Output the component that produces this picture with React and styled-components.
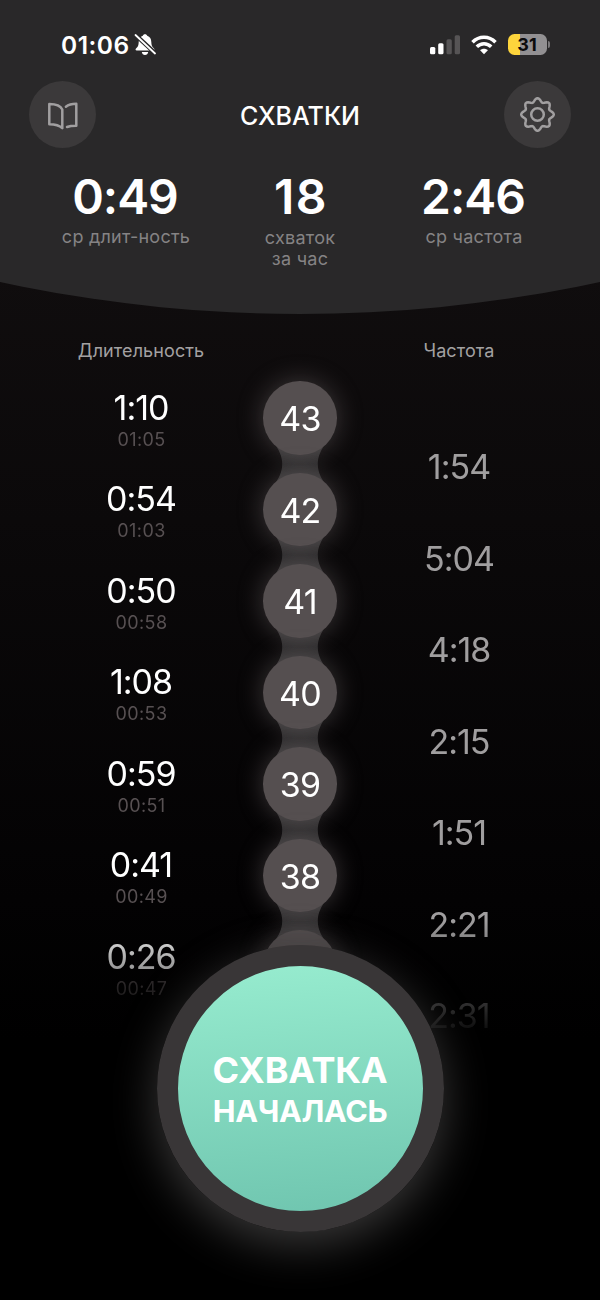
import styled, { createGlobalStyle } from "styled-components";

const contractions = [
  { id: 43, duration: "1:10", startedAt: "01:05", interval: "1:54" },
  { id: 42, duration: "0:54", startedAt: "01:03", interval: "5:04" },
  { id: 41, duration: "0:50", startedAt: "00:58", interval: "4:18" },
  { id: 40, duration: "1:08", startedAt: "00:53", interval: "2:15" },
  { id: 39, duration: "0:59", startedAt: "00:51", interval: "1:51" },
  { id: 38, duration: "0:41", startedAt: "00:49", interval: "2:21" },
  { id: null, duration: "0:26", startedAt: "00:47", interval: "2:31" },
];

const GlobalStyle = createGlobalStyle`
  * {
    box-sizing: border-box;
  }
  body {
    margin: 0;
    background: #000;
    font-family: Inter, "Liberation Sans", sans-serif;
  }
`;

const Screen = styled.div`
  position: relative;
  width: 600px;
  height: 1300px;
  overflow: hidden;
  color: #fff;
  background: linear-gradient(#100d0e 270px, #0b090a 520px, #030203 900px, #000 1040px);
`;

const Header = styled.header`
  height: 314px;
  background: #292829;
  clip-path: circle(1422px at 50% calc(100% - 1422px));
`;

const StatusBar = styled.div`
  height: 81px;
  padding: 30px 50px 0 61px;
  display: flex;
  justify-content: space-between;
`;

const StatusGroup = styled.div`
  height: 29px;
  display: flex;
  align-items: center;
  gap: ${({ $gap }) => $gap}px;
`;

const Clock = styled.span`
  font-size: 24.5px;
  font-weight: 600;
  letter-spacing: 0.5px;
`;

const Battery = styled.div`
  width: 39px;
  height: 21px;
  padding-right: 1px;
  border-radius: 6.5px;
  background: linear-gradient(90deg, #fdd53c 12px, #929092 12px);
  color: #0c0b0c;
  font-size: 18px;
  font-weight: 700;
  line-height: 21px;
  text-align: center;
`;

const BatteryTip = styled.div`
  width: 2px;
  height: 7px;
  border-radius: 0 3px 3px 0;
  background: #7a787a;
`;

const NavBar = styled.nav`
  height: 67px;
  padding: 0 29px;
  display: flex;
  align-items: center;
  justify-content: space-between;
`;

const RoundButton = styled.button`
  width: 67px;
  height: 67px;
  padding: 0;
  border: 0;
  border-radius: 50%;
  background: #3b393a;
  color: #a19fa0;
  display: flex;
  align-items: center;
  justify-content: center;
`;

const Title = styled.h1`
  margin: 0;
  padding-top: 2px;
  font-size: 25px;
  font-weight: 500;
`;

const Stats = styled.div`
  padding: 24px 39px 0;
  display: grid;
  grid-template-columns: repeat(3, 174px);
  text-align: center;
`;

const StatValue = styled.div`
  padding-right: ${({ $spacing }) => ($spacing ? 0 : 2)}px;
  padding-left: ${({ $spacing }) => ($spacing ? 2 : 0)}px;
  font-size: 48px;
  font-weight: 600;
  line-height: 50px;
  letter-spacing: ${({ $spacing }) => $spacing || -1}px;
`;

const StatLabel = styled.div`
  margin-top: ${({ $top }) => $top || 4}px;
  color: #858384;
  font-size: 18px;
  line-height: 21px;
  letter-spacing: 0.25px;
  white-space: pre-line;
`;

const ColumnTitles = styled.div`
  height: 28px;
  padding: 0 62px;
  margin-top: 26px;
  display: grid;
  grid-template-columns: 158px 160px 158px;
  color: #a3a1a2;
  font-size: 18px;
  line-height: 22px;
  letter-spacing: 0.1px;
  text-align: center;

  & > :last-child {
    grid-column: 3;
  }
`;

/* starts under the titles so the first glow is not cut */
const History = styled.div`
  height: 700px;
  margin-top: -28px;
  padding: 32px 62px 0;
  display: grid;
  grid-template-columns: 158px 160px 158px;
  overflow: hidden;
  mask-image: linear-gradient(#000 580px, transparent 700px);
`;

const Durations = styled.div`
  text-align: center;
`;

const DurationItem = styled.div`
  height: 91.5px;
  padding-top: 14.5px;
`;

const Duration = styled.div`
  font-size: 34px;
  line-height: 42px;
  letter-spacing: -1px;
`;

const StartedAt = styled.div`
  padding-left: 1px;
  color: #575052;
  font-size: 18px;
  line-height: 22px;
  letter-spacing: 0.4px;
`;

const Intervals = styled.div`
  padding-top: 49px;
  text-align: center;
`;

const Interval = styled.div`
  height: 91.5px;
  color: #a09e9f;
  font-size: 34px;
  line-height: 91.5px;
  letter-spacing: -1px;
`;

const Chain = styled.div`
  padding-top: 9px;
  display: flex;
  flex-direction: column;
  align-items: center;
`;

const Node = styled.div`
  flex: none;
  width: 73.5px;
  height: 73.5px;
  border-radius: 50%;
  background: #554f50;
  box-shadow: 0 0 26px rgba(125, 115, 117, 0.45);
  font-size: 34px;
  line-height: 75px;
  letter-spacing: -0.8px;
  text-align: center;
  position: relative;
`;

const LinkShape = styled.svg`
  flex: none;
  width: 56px;
  height: 46px;
  margin: -14px 0;
`;

const StartButton = styled.button`
  position: absolute;
  top: 944.5px;
  left: 156.5px;
  width: 287px;
  height: 287px;
  padding: 3px 0 0;
  border: 21.5px solid #393637;
  border-radius: 50%;
  background: linear-gradient(175deg, #97eccf, #6fc5af);
  box-shadow: 0 13px 46px rgba(125, 122, 123, 0.46);
  color: #fff;
  font-family: inherit;
  font-weight: 700;
  text-align: center;
`;

const ActionName = styled.div`
  font-size: 36px;
  line-height: 42px;
  letter-spacing: -0.3px;
`;

const ActionState = styled.div`
  font-size: 30.5px;
  line-height: 40px;
  letter-spacing: -0.3px;
`;

const BellOffIcon = () => (
  <svg width="22" height="23" viewBox="0 0 22 23">
    <g fill="#fff">
      <path d="M11 1.2c-1.2 0-2 .7-2.2 1.6C6 3.7 4.800 6 4.700 9c-.1 3.500-.8 4.700-2.700 6.500-.8.8-.6 2 .7 2h16.600c1.300 0 1.500-1.200.7-2-1.900-1.800-2.600-3-2.700-6.500-.1-3-1.300-5.300-4.100-6.200C13 1.900 12.200 1.200 11 1.200z" />
      <path d="M7.800 19h6.400c-.3 1.900-1.500 3-3.200 3s-2.900-1.100-3.200-3z" />
    </g>
    <path d="M1 1.500L21.500 20.500" stroke="#292829" strokeWidth="4.400" />
    <path d="M1.500 2L21 20.500" stroke="#fff" strokeWidth="1.8" strokeLinecap="round" />
  </svg>
);

const SignalIcon = () => (
  <svg width="30" height="20" viewBox="0.3 0 30 20">
    <rect x="0.3" y="12" width="5.3" height="7.3" rx="1.5" fill="#fff" />
    <rect x="8.5" y="8.2" width="5.3" height="11.1" rx="1.5" fill="#fff" />
    <rect x="16.8" y="4.3" width="5.3" height="15" rx="1.5" fill="#565455" />
    <rect x="25" y="0.3" width="5.3" height="19" rx="1.5" fill="#565455" />
  </svg>
);

const WifiIcon = () => (
  <svg width="26" height="20" viewBox="0 0 26 20" fill="none" stroke="#fff" strokeWidth="3.5">
    <path d="M1.500 7.300C8 .6 18 .6 24.500 7.300" />
    <path d="M5.800 11.800C10 7.700 16 7.700 20.200 11.800" />
    <path d="M13 19.300l-3.900-4.100c2.200-2 5.600-2 7.800 0z" fill="#fff" stroke="none" />
  </svg>
);

const BookIcon = () => (
  <svg
    width="32"
    height="32"
    viewBox="0 0 32 32"
    fill="none"
    stroke="currentColor"
    strokeWidth="2.5"
    strokeLinecap="round"
    strokeLinejoin="round"
  >
    <path d="M2.300 5v20.200c5.500 0 10.300 1.300 13 4V10.500C13.500 6.600 8.700 5 2.300 5z" />
    <path d="M18.900 7.700c2.400-1.900 6-2.900 10.400-2.900v21.900c-3.800 0-6.800.3-9.300 1.300" />
  </svg>
);

// eight soft teeth around the hub
const gearPath =
  Array.from({ length: 96 }, (_, i) => {
    const angle = (i / 96) * Math.PI * 2;
    const radius = 14.5 + 1.8 * Math.cos(angle * 8);
    const x = 17.5 + radius * Math.sin(angle);
    const y = 17.5 - radius * Math.cos(angle);
    return `${i ? "L" : "M"}${x.toFixed(2)} ${y.toFixed(2)}`;
  }).join("") + "Z";

const GearIcon = () => (
  <svg width="35" height="35" viewBox="0 0 35 35" fill="none" stroke="currentColor" strokeWidth="2.5">
    <path d={gearPath} strokeLinejoin="round" />
    <circle cx="17.5" cy="17.5" r="6.3" />
  </svg>
);

const ChainLink = () => (
  <LinkShape viewBox="0 0 56 46">
    <defs>
      <linearGradient id="link" x1="0" y1="0" x2="0" y2="1">
        <stop offset="0.2" stopColor="#383637" />
        <stop offset="0.5" stopColor="#2b2a2b" />
        <stop offset="0.8" stopColor="#383637" />
      </linearGradient>
    </defs>
    <path d="M1 0C7 9 10.200 15 10.200 23S7 37 1 46H55C49 37 45.800 31 45.800 23S49 9 55 0z" fill="url(#link)" />
  </LinkShape>
);

export default function App() {
  return (
    <Screen>
      <GlobalStyle />
      <Header>
        <StatusBar>
          <StatusGroup $gap={4.5}>
            <Clock>01:06</Clock>
            <BellOffIcon />
          </StatusGroup>
          <StatusGroup $gap={11}>
            <SignalIcon />
            <WifiIcon />
            <StatusGroup $gap={1}>
              <Battery>31</Battery>
              <BatteryTip />
            </StatusGroup>
          </StatusGroup>
        </StatusBar>
        <NavBar>
          <RoundButton>
            <BookIcon />
          </RoundButton>
          <Title>СХВАТКИ</Title>
          <RoundButton>
            <GearIcon />
          </RoundButton>
        </NavBar>
        <Stats>
          <div>
            <StatValue>0:49</StatValue>
            <StatLabel>ср длит-ность</StatLabel>
          </div>
          <div>
            <StatValue $spacing={1.5}>18</StatValue>
            <StatLabel $top={5}>{"схваток\nза час"}</StatLabel>
          </div>
          <div>
            <StatValue>2:46</StatValue>
            <StatLabel>ср частота</StatLabel>
          </div>
        </Stats>
      </Header>
      <ColumnTitles>
        <span>Длительность</span>
        <span>Частота</span>
      </ColumnTitles>
      <History>
        <Durations>
          {contractions.map((item) => (
            <DurationItem key={item.startedAt}>
              <Duration>{item.duration}</Duration>
              <StartedAt>{item.startedAt}</StartedAt>
            </DurationItem>
          ))}
        </Durations>
        <Chain>
          {contractions.map((item, index) => [
            index > 0 && <ChainLink key={`link-${item.startedAt}`} />,
            <Node key={item.startedAt}>{item.id}</Node>,
          ])}
        </Chain>
        <Intervals>
          {contractions.map((item) => (
            <Interval key={item.startedAt}>{item.interval}</Interval>
          ))}
        </Intervals>
      </History>
      <StartButton>
        <ActionName>СХВАТКА</ActionName>
        <ActionState>НАЧАЛАСЬ</ActionState>
      </StartButton>
    </Screen>
  );
}
